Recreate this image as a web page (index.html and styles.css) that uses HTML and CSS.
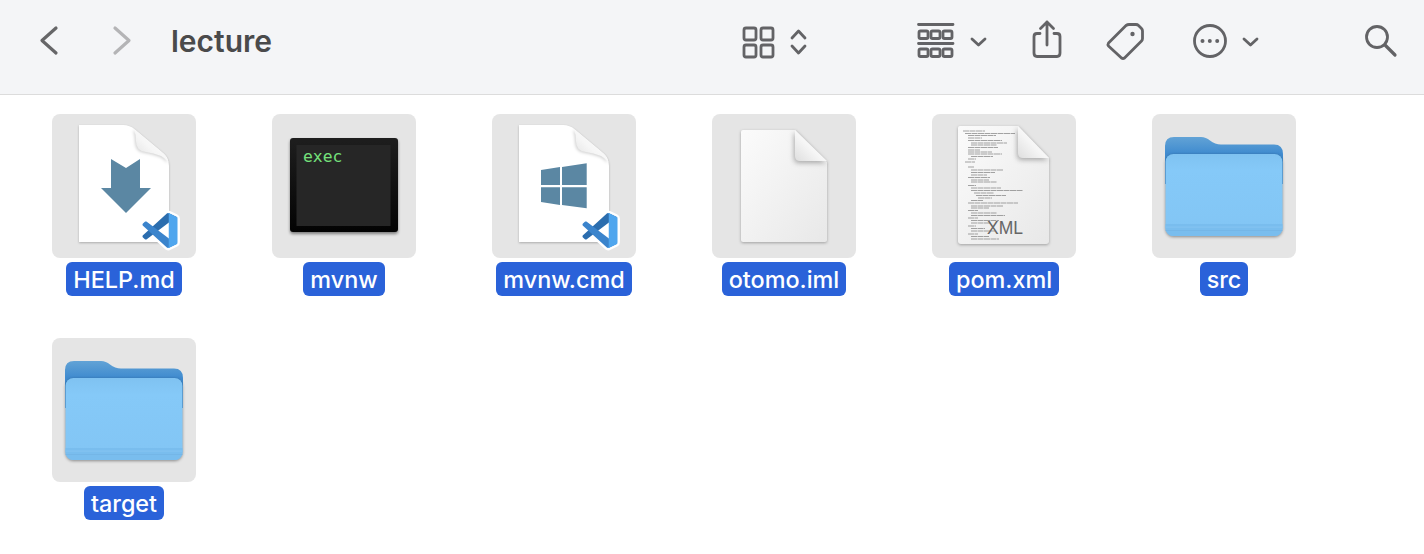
FILE: index.html
```html
<!DOCTYPE html>
<html lang="en">
<head>
  <meta charset="UTF-8">
  <meta name="viewport" content="width=device-width, initial-scale=1.0">
  <title>lecture</title>
  <link rel="stylesheet" href="styles.css">
</head>
<body>
  <!-- Shared icon parts -->
  <svg class="icon-defs" aria-hidden="true">
    <defs>
      <linearGradient id="flap-fill" x1="0" y1="1" x2="1" y2="0">
        <stop offset="0" stop-color="#dedede"/>
        <stop offset=".45" stop-color="#f6f6f6"/>
        <stop offset="1" stop-color="#ffffff"/>
      </linearGradient>
      <linearGradient id="page-fill" x1="0" y1="0" x2="1" y2="1">
        <stop offset="0" stop-color="#fbfbfb"/>
        <stop offset="1" stop-color="#e8e8e8"/>
      </linearGradient>
      <linearGradient id="exec-fill" x1="0" y1="0" x2="0" y2="1">
        <stop offset="0" stop-color="#1e1e1e"/>
        <stop offset="1" stop-color="#030303"/>
      </linearGradient>
      <linearGradient id="folder-back" x1="0" y1="0" x2="0" y2="1">
        <stop offset="0" stop-color="#62a3d6"/>
        <stop offset=".35" stop-color="#408bcf"/>
        <stop offset="1" stop-color="#3f8bd0"/>
      </linearGradient>
      <linearGradient id="folder-front" x1="0" y1="0" x2="0" y2="1">
        <stop offset="0" stop-color="#7fc2f1"/>
        <stop offset=".2" stop-color="#85c9f8"/>
        <stop offset="1" stop-color="#82c5f4"/>
      </linearGradient>
      <symbol id="doc" viewBox="0 0 144 144">
        <path class="doc-page" d="M27 11H71Q78 11 83 15.500L111 39Q117 44 117 52V128H27Z"/>
        <path class="doc-flap" d="M82 15L111 39Q115 42 116.500 48Q110 40 94 38Q84 37 84 27Q84 20 82 15Z"/>
      </symbol>
      <symbol id="vscode" viewBox="0 0 144 144">
        <g transform="translate(90.500 99) scale(.35)">
          <path class="vs-outline" d="M75.860 99.130C73.480 100.270 70.620 99.790 68.750 97.920L29.400 62L12.180 74.970C10.580 76.180 8.340 76.080 6.860 74.730L1.350 69.730C-.47 68.080-.47 65.230 1.340 63.580L16.300 50L1.340 36.420C-.47 34.770-.47 31.920 1.350 30.270L6.860 25.270C8.340 23.920 10.580 23.820 12.180 25.030L29.400 38L68.750 2.080C70.620.21 73.480-.27 75.860.87L96.460 10.790C98.620 11.830 100 14.010 100 16.420V83.580C100 85.990 98.620 88.170 96.460 89.210Z"/>
          <path fill="#2b6dae" d="M96.460 10.800L75.860.88C73.480-.27 70.620.22 68.750 2.080L1.340 63.580C-.47 65.230-.47 68.080 1.350 69.730L6.860 74.730C8.340 76.080 10.580 76.180 12.180 74.970L93.400 13.360C96.130 11.300 100 13.240 100 16.660V16.420C100 14.010 98.620 11.820 96.460 10.800Z"/>
          <path fill="#3b84cc" d="M96.460 89.200L75.860 99.120C73.480 100.270 70.620 99.780 68.750 97.920L1.340 36.420C-.47 34.770-.47 31.920 1.350 30.270L6.860 25.270C8.340 23.920 10.580 23.820 12.180 25.030L93.400 86.640C96.130 88.700 100 86.760 100 83.340V83.580C100 85.990 98.620 88.180 96.460 89.200Z"/>
          <path fill="#4fa6ee" d="M75.860 99.130C73.480 100.270 70.620 99.790 68.750 97.920C71.060 100.230 75 98.600 75 95.330V4.670C75 1.400 71.060-.23 68.750 2.080C70.620.21 73.480-.27 75.860.87L96.460 10.790C98.620 11.830 100 14.010 100 16.420V83.580C100 85.990 98.620 88.170 96.460 89.210Z"/>
        </g>
      </symbol>
      <symbol id="folder" viewBox="0 0 144 144">
        <path fill="url(#folder-back)" d="M13 32Q13 23 22 23H49Q54 23 58 26.500Q63 30.500 69 30.500H122Q131 30.500 131 40V70H13Z"/>
        <g class="folder-shadow">
          <rect x="13.500" y="40" width="117" height="82" rx="8" fill="url(#folder-front)"/>
        </g>
        <path fill="#79bdee" d="M13.500 110H130.500V114C130.500 118.500 127 122 122.500 122H21.500C17 122 13.500 118.500 13.500 114Z"/>
        <rect x="13.500" y="112.500" width="117" height="1.200" fill="#84c4f1"/>
        <rect x="13.500" y="116" width="117" height="1" fill="#74b6e7"/>
      </symbol>
    </defs>
  </svg>

  <header class="toolbar">
    <svg class="tool" viewBox="39 0 20 94" width="20"><path d="M56 28L42 40.500L56 53" class="line line-back"/></svg>
    <svg class="tool tool-forward" viewBox="112 0 20 94" width="20"><path d="M115 28L129 40.500L115 53" class="line line-off"/></svg>
    <h1 class="folder-name">lecture</h1>

    <!-- view switcher -->
    <svg class="tool tool-view" viewBox="741 0 67 94" width="67">
      <g class="line line-thin">
        <rect x="744" y="28" width="12" height="12" rx="2"/>
        <rect x="761" y="28" width="12" height="12" rx="2"/>
        <rect x="744" y="45" width="12" height="12" rx="2"/>
        <rect x="761" y="45" width="12" height="12" rx="2"/>
        <path d="M792 38L798.500 31L805 38M792 46L798.500 53L805 46"/>
      </g>
    </svg>
    <svg class="tool tool-group" viewBox="916 0 72 94" width="72">
      <g class="line line-thin">
        <path d="M918.500 24.500H953M918.500 43.500H953"/>
        <rect x="919" y="31" width="9" height="7.500" rx="1.500"/>
        <rect x="931" y="31" width="9" height="7.500" rx="1.500"/>
        <rect x="943" y="31" width="9" height="7.500" rx="1.500"/>
        <rect x="919" y="49" width="9" height="7.500" rx="1.500"/>
        <rect x="931" y="49" width="9" height="7.500" rx="1.500"/>
        <rect x="943" y="49" width="9" height="7.500" rx="1.500"/>
        <path d="M972 39L978.500 45L985 39"/>
      </g>
    </svg>
    <svg class="tool tool-share" viewBox="1031 0 32 94" width="32">
      <g class="line line-thin">
        <path d="M1040 33.500H1037Q1034 33.500 1034 36.500V53Q1034 56.500 1037 56.500H1057Q1060 56.500 1060 53V36.500Q1060 33.500 1057 33.500H1054"/>
        <path d="M1047 45V22M1040.500 28.500L1047 22L1053.500 28.500"/>
      </g>
    </svg>
    <svg class="tool tool-tag" viewBox="1105 0 40 94" width="40">
      <path class="line line-thin" d="M1108.500 43L1126 25.500Q1127.500 24.500 1129 24.500H1136Q1137.500 24.500 1138.500 25.500L1141.500 28.500Q1142.500 29.500 1142.500 31V38.500Q1142.500 40 1141.500 41L1124.500 58Q1123 59 1121.500 58L1108.500 46Q1107.500 44.500 1108.500 43Z"/>
      <circle cx="1132.500" cy="34" r="2.200" fill="#636366"/>
    </svg>
    <svg class="tool tool-action" viewBox="1192 0 68 94" width="68">
      <circle class="line line-thin" cx="1210" cy="41" r="15.500"/>
      <circle cx="1202.500" cy="41" r="2" fill="#636366"/>
      <circle cx="1209.800" cy="41" r="2" fill="#636366"/>
      <circle cx="1217.200" cy="41" r="2" fill="#636366"/>
      <path class="line line-thin" d="M1244 39L1250.500 45L1257 39"/>
    </svg>
    <svg class="tool tool-search" viewBox="1363 0 37 94" width="37">
      <circle class="line line-thin" cx="1377" cy="37" r="10.500"/>
      <path class="line" d="M1385 45L1395 55"/>
    </svg>
  </header>

  <main class="file-grid">
    <div class="file">
      <div class="tile">
        <svg class="thumb" viewBox="0 0 144 144">
          <use href="#doc"/>
          <path fill="#5b87a3" d="M59 45L74 54L88 45V74H99L74 99L49 74H59Z"/>
          <use href="#vscode"/>
        </svg>
      </div>
      <span class="file-label">HELP.md</span>
    </div>

    <div class="file">
      <div class="tile">
        <svg class="thumb" viewBox="0 0 144 144">
          <rect class="exec-body" x="18" y="24" width="108" height="94" rx="3"/>
          <rect x="24.500" y="31" width="94" height="81" fill="#262626"/>
          <text class="exec-text" x="31" y="48">exec</text>
        </svg>
      </div>
      <span class="file-label">mvnw</span>
    </div>

    <div class="file">
      <div class="tile">
        <svg class="thumb" viewBox="0 0 144 144">
          <use href="#doc"/>
          <path fill="#5b87a3" d="M49 56L68 53V71H49ZM70 53L94.700 49.300V71H70ZM49 73.300H68V91L49 88ZM70 73.300H94.700V94.300L70 91Z"/>
          <use href="#vscode"/>
        </svg>
      </div>
      <span class="file-label">mvnw.cmd</span>
    </div>

    <div class="file">
      <div class="tile">
        <svg class="thumb" viewBox="0 0 144 144">
          <path class="blank-page" d="M31 16H83L115 48V126Q115 128 113 128H31Q29 128 29 126V18Q29 16 31 16Z"/>
          <path class="fold" d="M83 16L115 47H88Q83 47 83 42Z"/>
        </svg>
      </div>
      <span class="file-label">otomo.iml</span>
    </div>

    <div class="file">
      <div class="tile">
        <svg class="thumb" viewBox="0 0 144 144">
          <path class="blank-page" d="M28 12H86L117 44V127Q117 130 114 130H29Q26 130 26 127V14Q26 12 28 12Z"/>
          <!-- tiny source text on the xml page -->
          <path class="xml-lines" d="M31 17h22M33 19.500h50M36 21.500h28M36 24h14M36 26.500h34M39 29h36M39 31h26M36 33.500h30M36 36h12M36 38h24M36 40h34M39 42.500h22M36 45h8M33 48h10M36 53h6M39 56h32M39 58.500h24M39 61h16M36 63.500h22M39 66h18M39 68h26M36 71.500h8M39 74h30M39 76.500h52M42 79h20M44 81.500h30M46 84h14M39 86.500h12M36 89h50M39 92h32M39 94h18M36 96.500h10M39 99h26M39 101.500h34M36 104h10M39 106.500h28M39 109h20M36 112h8M39 114.500h14M39 117h24M36 120h10M39 122.500h18M39 125h28"/>
          <path class="fold" d="M86 12L117 44H91Q86 44 86 39Z"/>
          <text class="xml-text" x="55" y="120">XML</text>
        </svg>
      </div>
      <span class="file-label">pom.xml</span>
    </div>

    <div class="file">
      <div class="tile">
        <svg class="thumb" viewBox="0 0 144 144"><use href="#folder"/></svg>
      </div>
      <span class="file-label">src</span>
    </div>

    <div class="file">
      <div class="tile">
        <svg class="thumb" viewBox="0 0 144 144"><use href="#folder"/></svg>
      </div>
      <span class="file-label">target</span>
    </div>
  </main>
</body>
</html>
```

FILE: styles.css
```css
/* General Styles */
* {
  box-sizing: border-box;
}

body {
  margin: 0;
  height: 100vh;
  overflow: hidden;
  background-color: #ffffff;
  font-family: 'Inter', 'Liberation Sans', sans-serif;
}

.icon-defs {
  position: absolute;
  width: 0;
  height: 0;
}

/* Toolbar */
.toolbar {
  display: flex;
  align-items: flex-start;
  height: 95px;
  padding: 0 24px 0 39px;
  background-color: #f4f5f7;
  border-bottom: 1px solid #dcdcdc;
}

.tool {
  flex: none;
  height: 94px;
}

.line {
  fill: none;
  stroke: #636366;
  stroke-width: 3.2;
  stroke-linecap: round;
  stroke-linejoin: round;
}

.line-thin {
  stroke-width: 2.8;
}

.line-back {
  stroke: #666668;
  stroke-width: 3.2;
}

.line-off {
  stroke: #b4b4b6;
}

.tool-forward {
  margin-left: 53px;
}

.folder-name {
  margin: 22px 0 0 39px;
  font-size: 30px;
  line-height: 38px;
  font-weight: 600;
  color: #4a4a4b;
}

.tool-view {
  margin-left: auto;
}

.tool-group {
  margin-left: 108px;
}

.tool-share {
  margin-left: 43px;
}

.tool-tag {
  margin-left: 42px;
}

.tool-action {
  margin-left: 47px;
}

.tool-search {
  margin-left: 103px;
}

/* Files */
.file-grid {
  display: grid;
  grid-template-columns: repeat(6, 220px);
  row-gap: 42px;
  padding: 19px 0 0 14px;
}

.file {
  display: flex;
  flex-direction: column;
  align-items: center;
}

.tile {
  width: 144px;
  height: 144px;
  background-color: #e5e5e5;
  border-radius: 8px;
}

.thumb {
  display: block;
  width: 144px;
  height: 144px;
}

.file-label {
  margin-top: 4px;
  height: 34px;
  padding: 0 7px;
  background-color: #2a62d9;
  border-radius: 6px;
  color: #ffffff;
  font-size: 23.4px;
  font-weight: 500;
  line-height: 35px;
  white-space: nowrap;
}

/* Icon parts */
.doc-page {
  fill: #ffffff;
  filter: drop-shadow(0 1px 1px rgba(0, 0, 0, 0.25));
}

.doc-flap {
  fill: url(#flap-fill);
  filter: drop-shadow(-0.5px 1px 1.5px rgba(0, 0, 0, 0.18));
}

.vs-outline {
  fill: #ffffff;
  stroke: #ffffff;
  stroke-width: 14;
  stroke-linejoin: round;
}

.exec-body {
  fill: url(#exec-fill);
  filter: drop-shadow(0 2px 1.5px rgba(0, 0, 0, 0.45));
}

.exec-text {
  font-family: 'DejaVu Sans Mono', monospace;
  font-size: 16.4px;
  fill: #74e07b;
}

.blank-page {
  fill: url(#page-fill);
  filter: drop-shadow(0 1.5px 1.5px rgba(0, 0, 0, 0.3));
}

.fold {
  fill: url(#flap-fill);
  filter: drop-shadow(-1px 2px 2.5px rgba(0, 0, 0, 0.3));
}

.xml-lines {
  fill: none;
  stroke: #6a6a6a;
  stroke-width: 0.6;
  stroke-dasharray: 6 0.5;
}

.xml-text {
  font-family: 'Liberation Sans', sans-serif;
  font-size: 17.5px;
  fill: #666666;
}

.folder-shadow {
  filter: drop-shadow(0 1.5px 1.5px rgba(0, 0, 0, 0.4));
}
```
